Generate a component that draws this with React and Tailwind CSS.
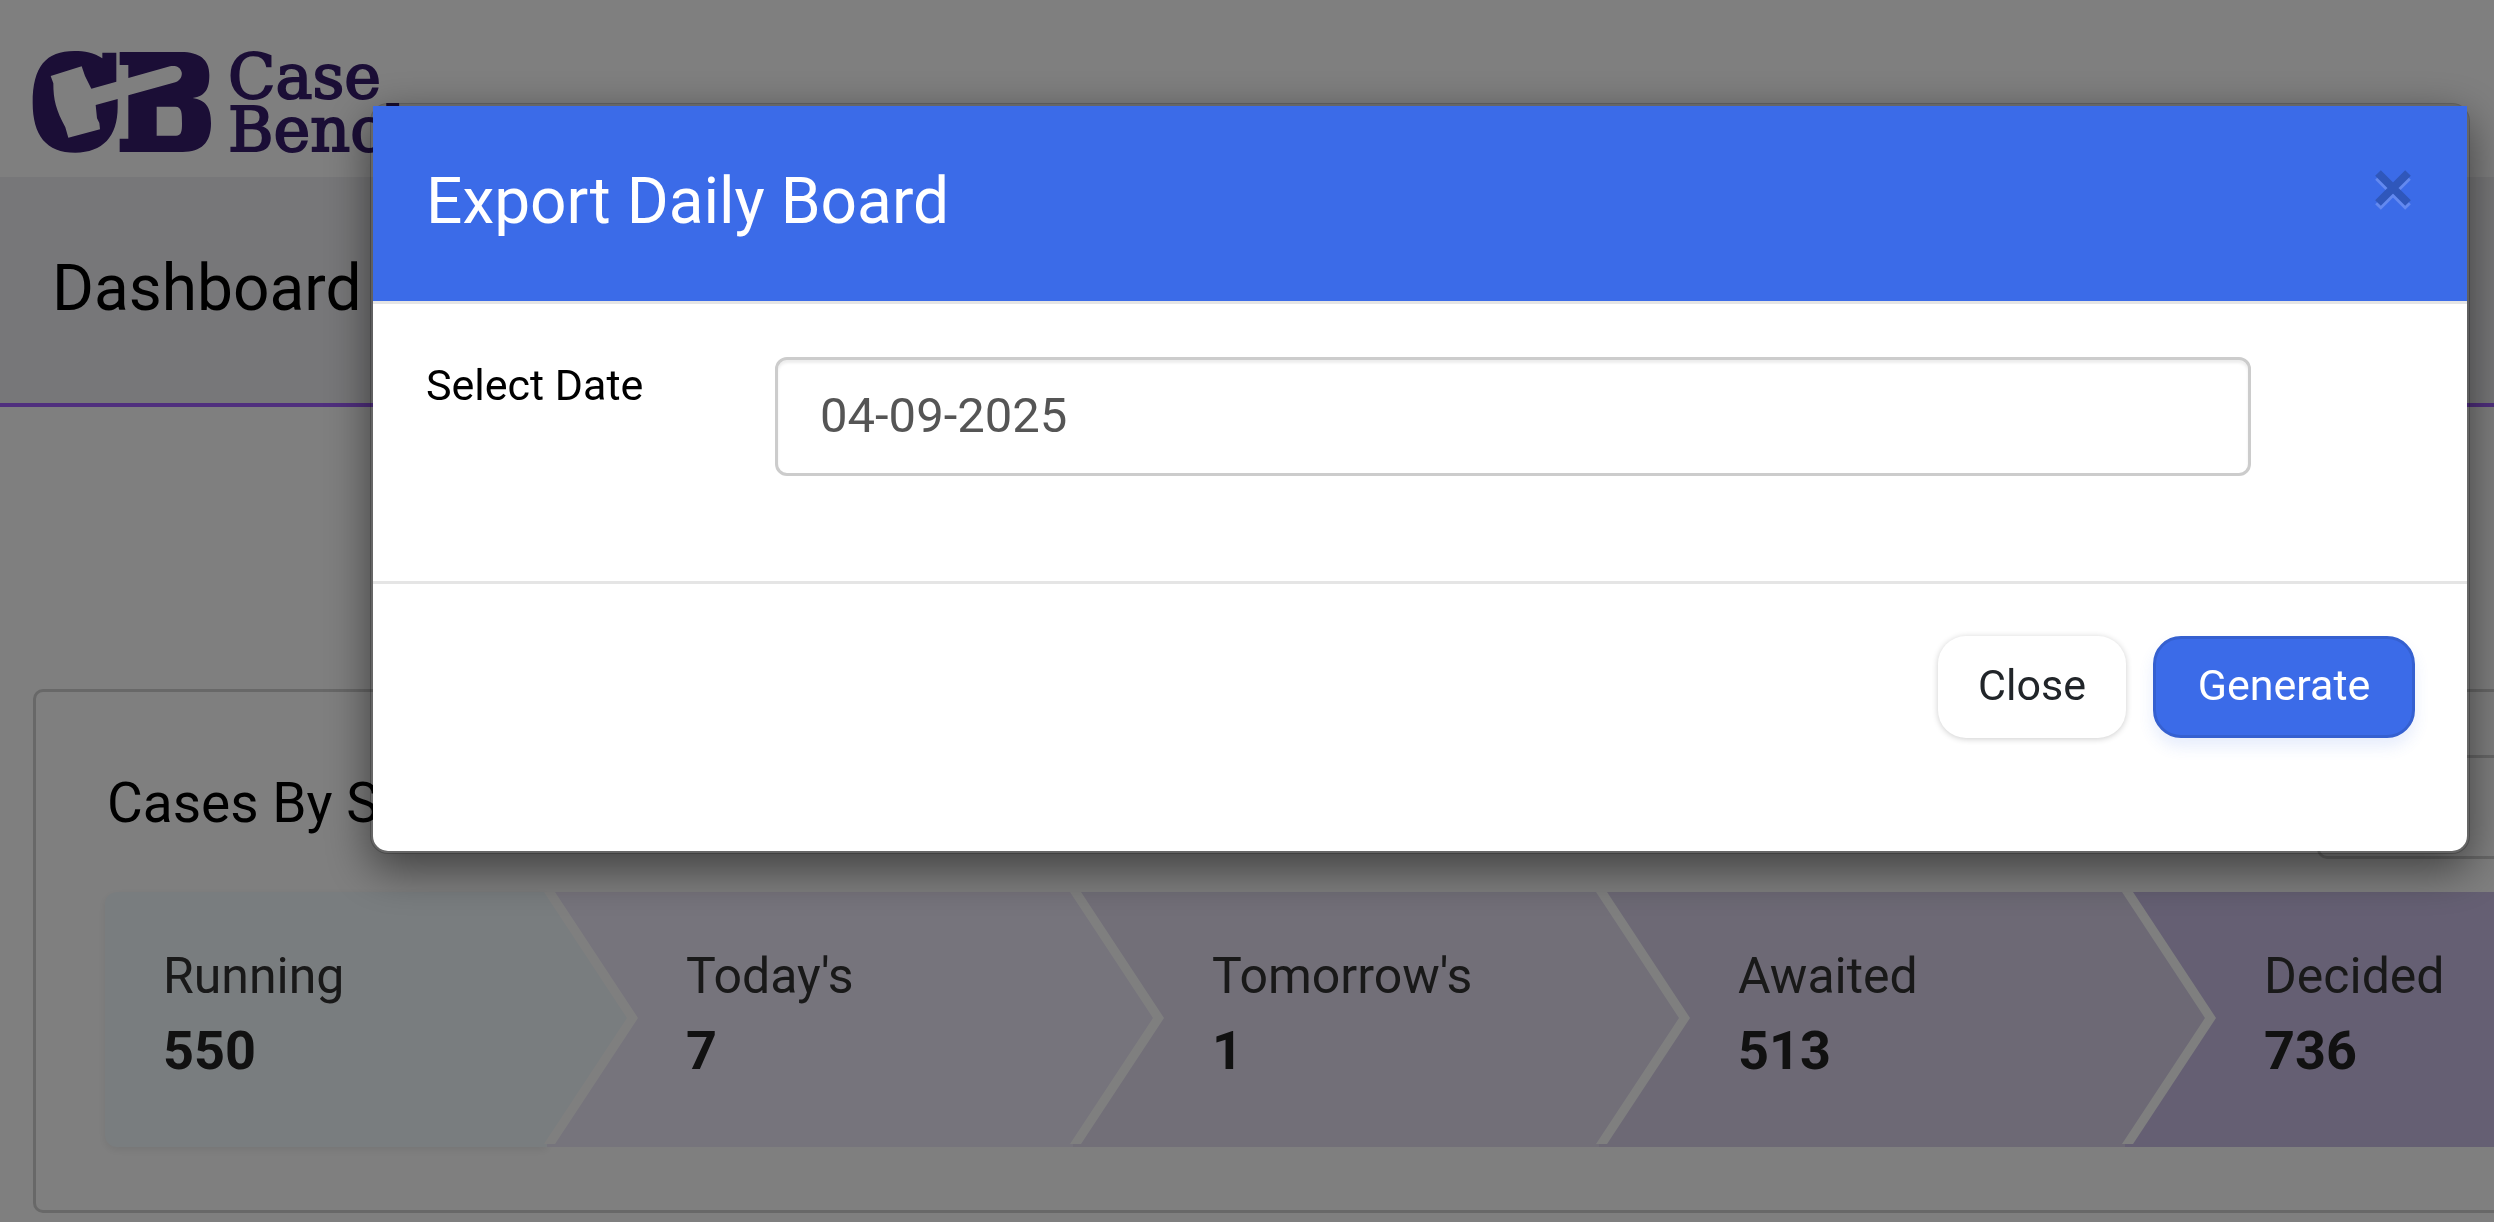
import { clsx } from "clsx";

const STEPS = [
  { label: "Running", count: 550, bg: "bg-[#f3fafe]" },
  { label: "Today's", count: 7, bg: "bg-[#ede8f9]" },
  { label: "Tomorrow's", count: 1, bg: "bg-[#e4def1]" },
  { label: "Awaited", count: 513, bg: "bg-[#dad3eb]" },
  { label: "Decided", count: 736, bg: "bg-[#cabfe6]" },
];

const Logo = () => (
  <a href="#" className="flex items-start gap-4 text-[#361c6c]">
    <svg viewBox="98 90 540 312" className="h-[104px] w-[180px]" fill="currentColor" aria-hidden="true">
      <path d="M351 98H309V115C285 98 255 93 225 93C140 93 100 140 100 248C100 345 140 398 228 398C310 398 355 350 355 262V237L289 255L293 295L300 309L302 328L207 353L198 322C170 270 162 240 162 190L154 168L247 139L257 168L276 206L351 185Z" />
      <path
        fillRule="evenodd"
        d="M361 96H545C600 96 630 118 630 165C630 205 620 228 580 234C618 240 635 260 635 310C635 370 605 396 550 396H361V356H387V226L528 187C545 182 549 165 547 157C543 140 528 136 512 139L387 174V135H361ZM472 260V347H530C546 347 548 335 548 310C548 280 548 260 528 260Z"
      />
    </svg>
    <span className="flex flex-col font-['DejaVu_Serif',serif] text-[62px] leading-[53px] [-webkit-text-stroke:2px_currentColor]">
      <span>Case</span>
      <span>Bench</span>
    </span>
  </a>
);

const Step = ({ label, count, bg, first, last }) => (
  <li
    className={clsx(
      "relative h-[255px] pt-[54px]",
      bg,
      first ? "w-[442px] shrink-0 rounded-l-xl pl-[58px] shadow-[0_3px_9px_rgba(0,0,0,0.08)]" : "pl-[139px]",
      last ? "flex-1" : "shrink-0",
      !first && !last && "w-[526px]"
    )}
  >
    <p className="text-[50px] leading-[60px] text-[#333]">{label}</p>
    <p className="mt-3 text-[54px] leading-[66px] font-bold text-[#222]">{count}</p>
    {/* arrow head, drawn over the next step */}
    {!last && (
      <>
        <span className="absolute top-0 left-full z-10 -ml-[3px] h-[252px] w-[94px] bg-white [clip-path:polygon(0_0,11px_0,100%_50%,11px_100%,0_100%)]" />
        <span
          className={clsx(
            "absolute top-0 left-full z-10 -ml-[3px] h-[252px] w-[83px] [clip-path:polygon(0_0,100%_50%,0_100%)]",
            bg
          )}
        />
      </>
    )}
  </li>
);

const Dashboard = () => (
  <div className="min-h-screen overflow-hidden bg-white">
    <header className="px-8 pt-[50px] pb-[21px]">
      <Logo />
    </header>

    <div className="border-b-4 border-[#a05efc] bg-[#efeff2] pt-[80px] pb-[82px] pl-[52px]">
      <h1 className="text-[64px] leading-[64px] text-black">Dashboard</h1>
    </div>

    <section className="mt-[282px] mb-[9px] ml-[33px] rounded-l-[10px] border-3 border-r-0 border-[#d0d0d0] pb-[63px] pl-[69px]">
      <div className="flex justify-between pt-[63px]">
        <h2 className="pt-[18px] pl-[2px] text-[55px] leading-[60px] text-black">Cases By Status</h2>
        <button
          type="button"
          aria-label="Filter"
          className="h-[104px] w-[177px] rounded-l-[10px] border-3 border-r-0 border-[#d0d0d0]"
        />
      </div>
      <ul className="mt-[33px] flex">
        {STEPS.map((step, i) => (
          <Step key={step.label} {...step} first={i === 0} last={i === STEPS.length - 1} />
        ))}
      </ul>
    </section>
  </div>
);

const CloseIcon = () => (
  <svg viewBox="0 0 36 42" className="h-[42px] w-[36px]" strokeWidth="8" fill="none" aria-hidden="true">
    <path d="M3 7L33 37M33 7L3 37" stroke="#6389f0" />
    <path d="M3 3L33 33M33 3L3 33" stroke="#2f57bb" />
  </svg>
);

const ExportModal = () => (
  <div className="fixed inset-0 z-50 bg-black/50 pt-[103px] pr-6 pl-[370px]">
    <div
      role="dialog"
      aria-labelledby="export-title"
      className="rounded-[18px] border-3 border-black/20 bg-white bg-clip-padding shadow-[0_15px_45px_rgba(0,0,0,0.5)]"
    >
      <div className="flex items-start justify-between border-b-3 border-[#e5e5e5] bg-[#3b6be8] pt-[64px] pr-14 pb-[67px] pl-[53px]">
        <h4 id="export-title" className="text-[64px] leading-[64px] text-white">
          Export Daily Board
        </h4>
        <button type="button" aria-label="Close dialog">
          <CloseIcon />
        </button>
      </div>

      <div className="flex items-start px-[53px] pt-[53px] pb-[105px]">
        <label htmlFor="board-date" className="w-[349px] shrink-0 text-[43px] leading-[56px] text-black">
          Select Date
        </label>
        <input
          id="board-date"
          type="text"
          defaultValue="04-09-2025"
          className="mr-[163px] h-[119px] min-w-0 flex-1 rounded-xl border-3 border-[#ccc] px-[42px] pb-[2px] text-[49px] text-[#555] shadow-[inset_0_3px_3px_rgba(0,0,0,0.075)]"
        />
      </div>

      <div className="flex justify-end gap-[27px] border-t-3 border-[#e5e5e5] px-[52px] pt-[52px] pb-[113px]">
        <button
          type="button"
          className="h-[102px] w-[188px] rounded-[28px] bg-white pb-1 text-[43px] text-[#212529] shadow-[0_1px_6px_rgba(0,0,0,0.2)]"
        >
          Close
        </button>
        <button
          type="button"
          className="h-[102px] w-[262px] rounded-[28px] border-3 border-[#3560d0] bg-[#3b6be8] pb-1 text-[43px] text-white shadow-[0_9px_15px_rgba(59,107,232,0.12)]"
        >
          Generate
        </button>
      </div>
    </div>
  </div>
);

export default function App() {
  return (
    <div className="font-[Roboto,sans-serif]">
      <Dashboard />
      <ExportModal />
    </div>
  );
}
